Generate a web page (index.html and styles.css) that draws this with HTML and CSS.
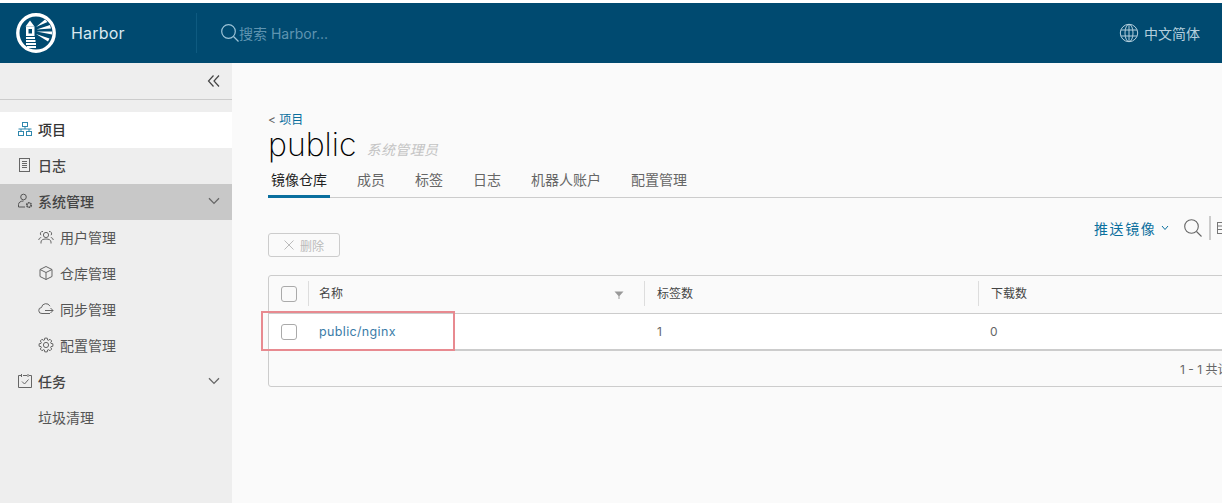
FILE: index.html
```html
<!DOCTYPE html>
<html lang="zh">
<head>
<meta charset="utf-8">
<title>Harbor</title>
<link rel="stylesheet" href="styles.css">
</head>
<body>
<div class="page">
  <header class="topbar">
    <div class="brand">
      <svg class="logo" viewBox="0 0 40 40" width="40" height="40">
        <circle cx="20" cy="20" r="18.200" fill="none" stroke="#fff" stroke-width="3.400"/>
        <path d="M9.500 13.500 L14 7.500 L18.500 13.500 Z" fill="#fff"/>
        <path d="M10 13.500h8.500v9.500H10z M12.500 16v4.500h3.500V16z" fill="#fff" fill-rule="evenodd"/>
        <path d="M10 25h9M10 28h9.500M10 31h10M11 34h9" stroke="#fff" stroke-width="2"/>
        <path d="M20 14 L29 6.500 L31.500 9 Z M20.500 16.500 L34 12 L35 15.500 Z M20.500 18.500 L36 18.500 L36 21.500 Z M20 21 L33.500 25.500 L32 28.500 Z" fill="#fff"/>
      </svg>
      <span class="brand-name">Harbor</span>
    </div>
    <div class="search">
      <svg class="search-icon" viewBox="0 0 20 20" width="20" height="20"><circle cx="8.500" cy="8.500" r="6.800" fill="none" stroke="#9cc4d8" stroke-width="1.200"/><path d="M13.500 13.500 L18.500 18.500" stroke="#9cc4d8" stroke-width="1.200"/></svg>
      <span class="search-text">搜索 Harbor...</span>
    </div>
    <div class="lang">
      <svg viewBox="0 0 20 20" width="20" height="20" fill="none" stroke="#b4cfdd" stroke-width="1"><circle cx="10" cy="10" r="8.700"/><ellipse cx="10" cy="10" rx="4" ry="8.700"/><path d="M10 1.300v17.400M2 7h16M2 13h16"/></svg>
      <span>中文简体</span>
    </div>
  </header>
  <div class="body-row">
    <nav class="sidebar">
      <div class="collapse">
        <svg viewBox="0 0 14 14" width="14" height="14" fill="none" stroke="#444" stroke-width="1.200"><path d="M6.500 1.500 L1.500 7 L6.500 12.500M12 1.500 L7 7 L12 12.500"/></svg>
      </div>
      <ul class="menu">
        <li class="item top active">
          <svg class="ico" viewBox="0 0 16 16" width="16" height="16" fill="none" stroke="#2f87ad" stroke-width="1"><rect x="5.500" y="1.500" width="5" height="4"/><rect x="1.500" y="10.500" width="5" height="4"/><rect x="9.500" y="10.500" width="5" height="4"/><path d="M1.500 8h13M8 5.500v2.500M4 8v2.500M12 8v2.500"/></svg>
          <span>项目</span>
        </li>
        <li class="item top">
          <svg class="ico" viewBox="0 0 16 16" width="16" height="16" fill="none" stroke="#666" stroke-width="1"><rect x="2.500" y="1.500" width="10" height="13"/><path d="M5 4.500h5M5 6.500h5M5 8.500h5M5 10.500h5"/></svg>
          <span>日志</span>
        </li>
        <li class="item top selected">
          <svg class="ico" viewBox="0 0 16 16" width="16" height="16" fill="none" stroke="#555" stroke-width="1"><circle cx="6.500" cy="4" r="2.800"/><path d="M1.500 14v-2.500c0-2 2-3.500 5-3.500"/><circle cx="12" cy="12" r="2.200" stroke-width="1.800" stroke-dasharray="1.500 .6"/><path d="M1.500 14H8"/></svg>
          <span>系统管理</span>
          <svg class="chev" viewBox="0 0 12 8" width="12" height="8" fill="none" stroke="#666" stroke-width="1.300"><path d="M1 1.200 L6 6.400 L11 1.200"/></svg>
        </li>
        <li class="item sub">
          <svg class="ico" viewBox="0 0 16 16" width="16" height="16" fill="none" stroke="#666" stroke-width="1"><circle cx="8" cy="6" r="2.600"/><path d="M3 14.500v-1.500c0-2 2-3 5-3s5 1 5 3v1.500"/><path d="M5 2.500a2.200 2.200 0 0 0-2 3.700M11 2.500a2.200 2.200 0 0 1 2 3.700M.8 11c0-1.400 1-2.200 2.400-2.500M15.200 11c0-1.400-1-2.200-2.400-2.500"/></svg>
          <span>用户管理</span>
        </li>
        <li class="item sub">
          <svg class="ico" viewBox="0 0 16 16" width="16" height="16" fill="none" stroke="#666" stroke-width="1"><path d="M8 1.500 L14 4.500 V11.500 L8 14.500 L2 11.500 V4.500 Z M2 4.500 L8 7.500 L14 4.500 M8 7.500 V14.500"/></svg>
          <span>仓库管理</span>
        </li>
        <li class="item sub">
          <svg class="ico" viewBox="0 0 16 16" width="16" height="16" fill="none" stroke="#666" stroke-width="1"><path d="M12 12.500H4a3 3 0 0 1-.5-6A4.500 4.500 0 0 1 12 5.200"/><path d="M7 9.500h8M12.500 7l2.500 2.500L12.500 12"/></svg>
          <span>同步管理</span>
        </li>
        <li class="item sub">
          <svg class="ico" viewBox="0 0 16 16" width="16" height="16" fill="none" stroke="#666" stroke-width="1"><circle cx="8" cy="8" r="2.600"/><polygon points="12.950,6.390 14.890,6.780 14.890,9.220 12.950,9.610 12.630,10.360 13.730,12.020 12.020,13.730 10.360,12.630 9.610,12.950 9.220,14.890 6.780,14.890 6.390,12.950 5.640,12.630 3.980,13.730 2.270,12.020 3.370,10.360 3.050,9.610 1.110,9.220 1.110,6.780 3.050,6.390 3.370,5.640 2.270,3.980 3.980,2.270 5.640,3.370 6.390,3.050 6.780,1.110 9.220,1.110 9.610,3.050 10.360,3.370 12.020,2.270 13.730,3.980 12.630,5.640"/></svg>
          <span>配置管理</span>
        </li>
        <li class="item top">
          <svg class="ico" viewBox="0 0 16 16" width="16" height="16" fill="none" stroke="#666" stroke-width="1"><path d="M4 2.500H1.500v12h13v-12H12M6 2.500h4M4.500 1v3M11 1v3"/><path d="M5 8.500l2.500 2.500 4-4.500"/></svg>
          <span>任务</span>
          <svg class="chev" viewBox="0 0 12 8" width="12" height="8" fill="none" stroke="#666" stroke-width="1.300"><path d="M1 1.200 L6 6.400 L11 1.200"/></svg>
        </li>
        <li class="item plain"><span>垃圾清理</span></li>
      </ul>
    </nav>
    <main class="content">
      <div class="crumb"><span class="lt">&lt;</span> <a>项目</a></div>
      <div class="title-row">
        <h1>public</h1>
        <span class="role">系统管理员</span>
      </div>
      <div class="tabs">
        <span class="tab current">镜像仓库</span>
        <span class="tab">成员</span>
        <span class="tab">标签</span>
        <span class="tab">日志</span>
        <span class="tab">机器人账户</span>
        <span class="tab">配置管理</span>
      </div>
      <div class="toolbar">
        <button class="del"><svg viewBox="0 0 10 10" width="10" height="10" fill="none" stroke="#bbb" stroke-width="1"><path d="M.5.500l9 9M9.500.500l-9 9"/></svg>删除</button>
        <div class="tools">
          <span class="push">推送镜像</span>
          <svg class="push-chev" viewBox="0 0 8 6" width="8" height="6" fill="none" stroke="#0a6f9e" stroke-width="1"><path d="M1 1 L4 4.500 L7 1"/></svg>
          <svg class="tool-search" viewBox="0 0 20 20" width="20" height="20" fill="none" stroke="#666" stroke-width="1.100"><circle cx="8.500" cy="8.500" r="6.800"/><path d="M13.500 13.500 L18.500 18.500"/></svg>
          <span class="sep"></span>
          <svg class="tool-view" viewBox="0 0 14 14" width="14" height="14" fill="none" stroke="#777" stroke-width="1"><rect x="1.500" y="1.500" width="11" height="11"/><path d="M1.500 5h11M1.500 8.500h11"/></svg>
        </div>
      </div>
      <div class="grid">
        <div class="grid-row head">
          <div class="c-check"><span class="box"></span></div>
          <div class="c-name"><span>名称</span><svg class="sort" viewBox="0 0 10 10" width="10" height="10"><path d="M.5 1.500h9L5.500 6v3h-1V6z" fill="#999"/></svg></div>
          <div class="c-tags">标签数</div>
          <div class="c-down">下载数</div>
        </div>
        <div class="grid-row data">
          <div class="c-check"><span class="box"></span></div>
          <div class="c-name"><a>public/nginx</a></div>
          <div class="c-tags">1</div>
          <div class="c-down">0</div>
          <div class="annot"></div>
        </div>
        <div class="grid-foot"><span>1 - 1 共计 1 条记录</span></div>
      </div>
    </main>
  </div>
</div>
</body>
</html>
```
FILE: styles.css
```css
* { box-sizing: border-box; }
html, body { margin: 0; padding: 0; height: 100%; overflow: hidden; background: #fff; }
body { font-family: "Inter", "Noto Sans CJK SC", sans-serif; color: #565656; }
.page { height: 503px; padding-top: 3px; display: flex; flex-direction: column; }

.topbar { height: 60px; flex: none; background: #004a70; display: flex; align-items: center; color: #fff; }
.brand { width: 197px; height: 40px; padding-left: 16px; display: flex; align-items: center; gap: 15px; border-right: 1px solid #0e5a80; flex: none; }
.logo { flex: none; }
.brand-name { font-size: 16px; letter-spacing: .2px; color: #d8e8f0; }
.search { display: flex; align-items: center; margin-left: 23px; }
.search-icon { flex: none; }
.search-text { font-size: 14px; color: #5f94b0; margin-left: -1px; }
.lang { margin-left: auto; padding-right: 22px; padding-bottom: 1px; display: flex; align-items: center; gap: 5px; font-size: 14px; color: #b4cfdd; }

.body-row { flex: 1; display: flex; min-height: 0; }
.sidebar { width: 232px; flex: none; background: #eeeeee; }
.collapse { height: 37px; border-bottom: 1px solid #ccc; display: flex; align-items: center; justify-content: flex-end; padding-right: 11px; }
.menu { list-style: none; margin: 12px 0 0; padding: 0; }
.item { height: 36px; display: flex; align-items: center; padding: 0 0 2px 17px; font-size: 14px; color: #555; }
.item.top { font-weight: 500; color: #444; }
.item .ico { flex: none; margin-right: 5px; }
.item.active { background: #fff; color: #333; }
.item.selected { background: #c8c8c8; }
.item.sub { padding-left: 38px; }
.item.sub .ico { margin-right: 6px; }
.item.plain { padding-left: 38px; }
.chev { margin-left: auto; margin-right: 12px; }

.content { flex: 1; min-width: 0; background: #fafafa; padding: 49px 0 0 36px; overflow: hidden; }
.crumb { font-size: 12px; line-height: 16px; color: #0a6f9e; }
.crumb .lt { color: #666; }
.title-row { display: flex; align-items: flex-end; height: 35px; }
h1 { margin: 0; font-size: 32px; font-weight: 200; line-height: 33px; padding-bottom: 2px; color: #000; }
.role { font-size: 14px; font-style: italic; color: #c4c4c4; margin-left: 10px; line-height: 21px; padding-bottom: 3px; letter-spacing: .4px; }
.tabs { width: 1000px; height: 35px; display: flex; align-items: flex-end; border-bottom: 1px solid #ccc; padding-top: 2px; }
.tab { font-size: 14px; height: 100%; display: flex; align-items: center; padding: 0 3px 4px; margin-right: 24px; color: #666; border-bottom: 3px solid transparent; margin-bottom: -1px; }
.tab.current { color: #222; border-bottom-color: #0a6f9e; }
.toolbar { display: flex; justify-content: space-between; align-items: flex-start; padding-top: 18px; height: 77px; }
.del { margin-top: 17px; width: 72px; height: 24px; border: 1px solid #ccc; border-radius: 3px; background: transparent; display: flex; align-items: center; justify-content: center; gap: 6px; font: 12px "Inter", "Noto Sans CJK SC", sans-serif; color: #bbb; padding: 0; }
.tools { display: flex; align-items: center; flex: none; height: 24px; width: 128px; overflow: hidden; }
.push { font-size: 14px; color: #0a6f9e; letter-spacing: 1.600px; white-space: nowrap; flex: none; }
.push-chev { margin-left: 5px; flex: none; }
.tool-search { margin-left: 14px; flex: none; }
.sep { width: 2px; height: 24px; background: #ccc; margin-left: 6px; flex: none; }
.tool-view { margin-left: 5px; flex: none; }

.grid { width: 1000px; height: 112px; border: 1px solid #ccc; border-radius: 3px; display: flex; flex-direction: column; }
.grid-row { display: flex; align-items: center; font-size: 12px; }
.head { height: 38px; flex: none; color: #444; border-bottom: 1px solid #ccc; padding-bottom: 2px; }
.data { height: 37px; flex: none; background: #fff; color: #666; border-bottom: 2px solid #ccc; position: relative; }
.c-check { width: 39px; flex: none; display: flex; justify-content: center; }
.c-name { width: 336px; flex: none; padding: 0 20px 0 11px; display: flex; justify-content: space-between; align-items: center; }
.c-tags { width: 334px; flex: none; padding-left: 13px; }
.c-down { flex: 1; padding-left: 12px; }
.head .c-name, .head .c-tags, .head .c-down { border-left: 1px solid #ddd; height: 25px; padding-bottom: 3px; }
.head .c-name { padding-left: 10px; }
.head .c-tags, .head .c-down { display: flex; align-items: center; padding-left: 12px; }
.sort { margin-top: 5px; }
.box { display: block; width: 16px; height: 16px; border: 1px solid #aaa; border-radius: 3px; background: #fff; }
.head .box { background: transparent; }
.c-name a { color: #3a7ca8; font-size: 12.500px; letter-spacing: .35px; }
.annot { position: absolute; left: -8px; top: -3px; width: 194px; height: 40px; border: 2px solid #e88a90; pointer-events: none; }
.grid-foot { flex: 1; display: flex; align-items: center; padding-left: 911px; font-size: 12px; color: #666; white-space: nowrap; }
```
